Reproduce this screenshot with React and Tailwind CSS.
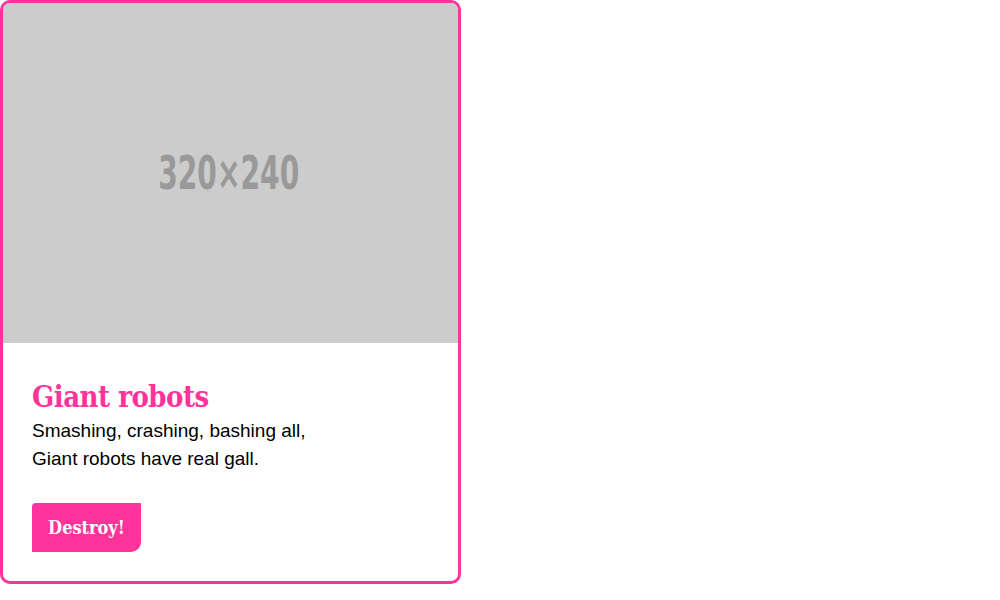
export default function App() {
  return (
    <div className="bg-white w-[1000px] h-[600px]">
      <div className="w-[461px] h-[584px] border-[3px] border-[#ff3399] rounded-[10px] overflow-hidden flex flex-col">
        <div className="h-[340px] bg-[#cccccc] flex items-center justify-center">
          <span className="font-['DejaVu_Sans_Condensed','DejaVu_Sans',sans-serif] font-semibold text-[46px] text-[#999999] leading-none scale-x-[0.68] ml-[-4px]">
            320×240
          </span>
        </div>
        <div className="px-[29px] pt-[37px] flex flex-col items-start">
          <h2 className="font-['DejaVu_Serif_Condensed','DejaVu_Serif',serif] font-bold text-[29px] leading-[34px] text-[#ff3399] tracking-[-0.5px]">
            Giant robots
          </h2>
          <p className="mt-[3px] font-['Liberation_Sans',Arial,sans-serif] text-[19px] leading-[28px] text-black">
            Smashing, crashing, bashing all,
            <br />
            Giant robots have real gall.
          </p>
          <button
            type="button"
            className="mt-[30px] w-[109px] h-[49px] bg-[#ff3399] text-white font-['DejaVu_Serif_Condensed','DejaVu_Serif',serif] font-bold text-[18px] rounded-tl-[4px] rounded-br-[10px]"
          >
            Destroy!
          </button>
        </div>
      </div>
    </div>
  )
}
